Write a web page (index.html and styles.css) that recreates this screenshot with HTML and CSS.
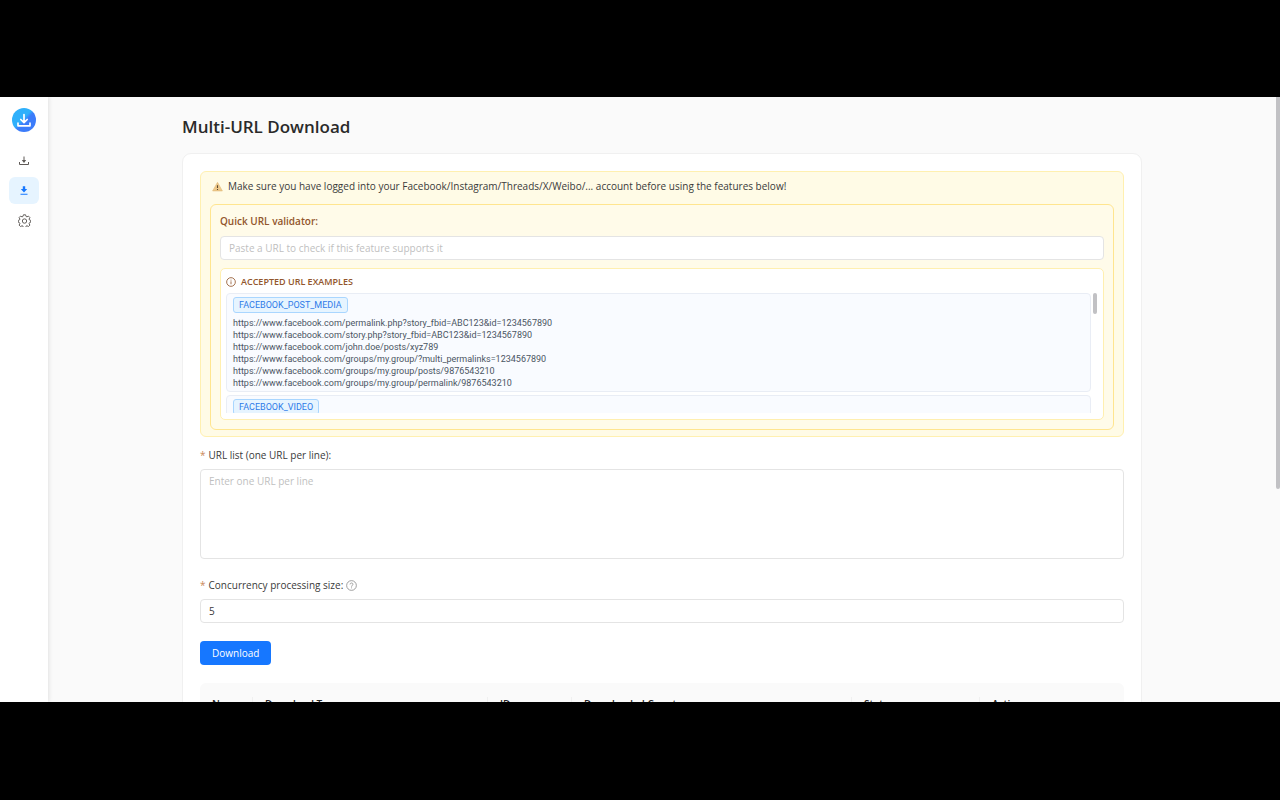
FILE: index.html
```html
<!DOCTYPE html>
<html lang="en">
<head>
  <meta charset="UTF-8">
  <meta name="viewport" content="width=device-width, initial-scale=1.0">
  <title>Multi-URL Download</title>
  <link rel="stylesheet" href="styles.css">
</head>
<body>
  <div class="app">
    <nav class="sidebar" aria-label="Main">
      <a href="#" class="logo" aria-label="Home">
        <svg viewBox="0 0 24 24" width="24" height="24">
          <defs>
            <linearGradient id="logo-bg" x1="0" y1="0" x2="1" y2="1">
              <stop offset="0.45" stop-color="#2fb0fb"/>
              <stop offset="0.55" stop-color="#3b7cfa"/>
            </linearGradient>
          </defs>
          <circle cx="12" cy="12" r="12" fill="url(#logo-bg)"/>
          <path d="M12 6.500v8M8.800 11.500l3.200 3.200 3.200-3.200M6 15.200v2.600h12v-2.600" fill="none" stroke="#fff" stroke-width="1.700" stroke-linecap="round" stroke-linejoin="round"/>
        </svg>
      </a>
      <a href="#" class="nav-item" aria-label="Download">
        <svg viewBox="0 0 12 12" width="12" height="12" fill="none" stroke="#5f5a57" stroke-width="1">
          <path d="M6 1.500v5M1.500 7v2.500h9V7"/>
          <path d="M3.800 5h4.400L6 8z" fill="#5f5a57" stroke="none"/>
        </svg>
      </a>
      <a href="#" class="nav-item active" aria-label="Multi-URL Download">
        <svg viewBox="0 0 12 12" width="12" height="12" fill="#1677ff">
          <path d="M4.800 1.200h2.400v2.800h2L6 7.500 2.800 4h2zM2.500 8.800h7v1h-7z"/>
        </svg>
      </a>
      <a href="#" class="nav-item" aria-label="Settings">
        <svg viewBox="0 0 24 24" width="13" height="13" fill="none" stroke="#5f5a57" stroke-width="1.800" stroke-linejoin="round">
          <path d="M10 1.500h4l.8 3 1.700.8 2.800-1.400 2.600 2.600-1.400 2.900.7 1.600 2.300.8v3.400l-2.300.9-.7 1.600 1.400 2.800-2.600 2.600-2.800-1.400-1.700.8-.8 2.500h-4l-.8-2.500-1.700-.8-2.800 1.400-2.600-2.600 1.400-2.800-.7-1.600-2.300-.9v-3.400l2.300-.8.7-1.600-1.400-2.900 2.600-2.600 2.800 1.400 1.700-.8z"/>
          <circle cx="12" cy="13" r="4"/>
        </svg>
      </a>
    </nav>

    <main class="content">
      <div class="container">
        <h1>Multi-URL Download</h1>

        <div class="card">
          <div class="alert">
            <p class="alert-title">
              <svg viewBox="0 0 12 12" width="11" height="11">
                <path d="M6 1.500L11.300 10.800H.7z" fill="#efc98a" stroke="#e0b878" stroke-width="0.700" stroke-linejoin="round"/>
                <path d="M6 4.500v3.200M6 8.600v1.100" stroke="#5c4a33" stroke-width="1.200"/>
              </svg>
              Make sure you have logged into your Facebook/Instagram/Threads/X/Weibo/... account before using the features below!
            </p>

            <div class="validator">
              <label class="validator-label" for="check-url">Quick URL validator:</label>
              <input class="field" type="text" id="check-url" placeholder="Paste a URL to check if this feature supports it">

              <div class="examples">
                <h2>
                  <svg viewBox="0 0 12 12" width="10" height="10" fill="none" stroke="#92562c">
                    <circle cx="6" cy="6" r="5.200"/>
                    <path d="M6 5.200v3.500M6 3.200v1.100"/>
                  </svg>
                  ACCEPTED URL EXAMPLES
                </h2>
                <div class="example-list">
                  <section class="example">
                    <span class="tag">FACEBOOK_POST_MEDIA</span>
                    <ul>
                      <li>https://www.facebook.com/permalink.php?story_fbid=ABC123&amp;id=1234567890</li>
                      <li>https://www.facebook.com/story.php?story_fbid=ABC123&amp;id=1234567890</li>
                      <li>https://www.facebook.com/john.doe/posts/xyz789</li>
                      <li>https://www.facebook.com/groups/my.group/?multi_permalinks=1234567890</li>
                      <li>https://www.facebook.com/groups/my.group/posts/9876543210</li>
                      <li>https://www.facebook.com/groups/my.group/permalink/9876543210</li>
                    </ul>
                  </section>
                  <section class="example">
                    <span class="tag">FACEBOOK_VIDEO</span>
                  </section>
                  <div class="list-thumb"></div>
                </div>
              </div>
            </div>
          </div>

          <form>
            <div class="form-item">
              <label class="required" for="url-list">URL list (one URL per line):</label>
              <textarea class="field" id="url-list" placeholder="Enter one URL per line"></textarea>
            </div>
            <div class="form-item">
              <label class="required" for="concurrency">Concurrency processing size:
                <svg viewBox="0 0 12 12" width="11" height="11" fill="none" stroke="#8c8c8c" stroke-width="0.900">
                  <circle cx="6" cy="6" r="5.300"/>
                  <path d="M4.400 4.800C4.400 2.800 7.600 2.800 7.600 4.700 7.600 5.900 6 5.900 6 7.300M6 8.100v1"/>
                </svg>
              </label>
              <input class="field" type="text" inputmode="numeric" id="concurrency" value="5">
            </div>
            <button class="btn" type="button">Download</button>
          </form>

          <table>
            <colgroup>
              <col class="col-name">
              <col class="col-type">
              <col class="col-id">
              <col class="col-count">
              <col class="col-status">
              <col>
            </colgroup>
            <thead>
              <tr>
                <th>Name</th>
                <th>Download Type</th>
                <th>ID</th>
                <th>Downloaded Count</th>
                <th>Status</th>
                <th>Action</th>
              </tr>
            </thead>
          </table>
        </div>
      </div>
      <div class="page-thumb"></div>
    </main>
  </div>
</body>
</html>
```
FILE: styles.css
```css
* {
  box-sizing: border-box;
}
body {
  margin: 0;
  height: 100vh;
  padding: 97px 0 98px;
  background: #000;
  color: #3a3a3a;
  font-family: 'Open Sans', 'Noto Sans', sans-serif;
  font-size: 10px;
  line-height: 16px;
}
.app {
  display: flex;
  height: 100%;
  overflow: hidden;
  background: #fafafa;
}

/* sidebar */
.sidebar {
  display: flex;
  flex-direction: column;
  align-items: center;
  width: 48px;
  padding-top: 11px;
  background: #fff;
  box-shadow: 1px 0 4px rgba(0, 0, 0, 0.1);
}
.logo {
  height: 24px;
  margin-bottom: 15px;
}
.nav-item {
  display: flex;
  align-items: center;
  justify-content: center;
  width: 30px;
  height: 27px;
  margin-bottom: 3px;
  border-radius: 6px;
}
.nav-item.active {
  background: #e6f4ff;
}

/* content */
.content {
  position: relative;
  flex: 1;
  padding: 18px 4px 0 0;
  overflow: hidden;
}
.container {
  max-width: 960px;
  margin: 0 auto;
}
h1 {
  margin: 0 0 14px;
  color: #2a2a2a;
  font-size: 17px;
  font-weight: 600;
  line-height: 24px;
}
.card {
  padding: 17px;
  background: #fff;
  border: 1px solid #f0f0f0;
  border-radius: 9px;
}
.page-thumb {
  position: absolute;
  top: 0;
  right: 0;
  width: 4px;
  height: 392px;
  background: #c1c1c4;
  border-radius: 0 0 2px 2px;
}

/* alert */
.alert {
  padding: 6px 9px;
  background: #fffbe6;
  border: 1px solid #fff0b0;
  border-radius: 6px;
}
.alert-title {
  display: flex;
  align-items: center;
  gap: 5px;
  margin: 0 0 10px 2px;
}
.validator {
  padding: 8px 9px 9px;
  background: #fffbe9;
  border: 1px solid #ffe58f;
  border-radius: 6px;
}
.validator-label {
  display: block;
  margin-bottom: 7px;
  color: #92562c;
  font-weight: 600;
}
.field {
  display: block;
  width: 100%;
  height: 24px;
  padding: 0 8px;
  background: #fff;
  border: 1px solid #e4e4e4;
  border-radius: 4px;
  color: inherit;
  font: inherit;
}
.field::placeholder {
  color: #bfbfbf;
}
.examples {
  margin-top: 8px;
  padding: 5px 6px 6px 5px;
  background: #fff;
  border: 1px solid #ffefb0;
  border-radius: 5px;
}
.examples h2 {
  display: flex;
  align-items: center;
  gap: 5px;
  margin: 0 0 3px;
  color: #92562c;
  font-size: 9px;
  font-weight: 600;
}
.example-list {
  position: relative;
  height: 120px;
  padding-right: 6px;
  overflow: hidden;
}
.example {
  margin-bottom: 3px;
  padding: 3px 6px 2px;
  background: #f9fbff;
  border: 1px solid #e9edf5;
  border-radius: 4px;
  font-family: Roboto, 'Open Sans', sans-serif;
  font-size: 9px;
  line-height: 12px;
}
.tag {
  display: block;
  width: fit-content;
  padding: 1px 5px;
  background: #e6f4ff;
  border: 1px solid #a9d6ff;
  border-radius: 3px;
  color: #2f7be8;
}
.example ul {
  margin: 4px 0 0;
  padding: 0;
  list-style: none;
  color: #4b5563;
}
.list-thumb {
  position: absolute;
  top: 0;
  right: 0;
  width: 4px;
  height: 21px;
  background: #c1c1c4;
  border-radius: 2px;
}

/* form */
.form-item {
  margin-bottom: 18px;
}
.form-item label {
  display: flex;
  align-items: center;
  gap: 3px;
  margin-bottom: 6px;
}
.required::before {
  content: '*';
  color: #c98a5a;
}
form {
  padding-top: 10px;
}
textarea.field {
  height: 90px;
  padding: 3px 8px;
  resize: none;
}
.btn {
  display: block;
  height: 24px;
  padding: 0 12px;
  background: #1677ff;
  border: none;
  border-radius: 4px;
  color: #fff;
  font: inherit;
  cursor: pointer;
}

/* table */
table {
  width: 100%;
  margin-top: 18px;
  border-collapse: separate;
  border-spacing: 0;
  table-layout: fixed;
  background: #fafafa;
  border-radius: 6px 6px 0 0;
}
th {
  position: relative;
  padding: 13px 12px 12px;
  color: #222;
  font-weight: 600;
  text-align: left;
  white-space: nowrap;
}
th:not(:last-child)::after {
  content: '';
  position: absolute;
  top: 14px;
  right: 0;
  width: 1px;
  height: 16px;
  background: #f0f0f0;
}
.col-name {
  width: 53px;
}
.col-type {
  width: 235px;
}
.col-id {
  width: 84px;
}
.col-count {
  width: 280px;
}
.col-status {
  width: 128px;
}
```
